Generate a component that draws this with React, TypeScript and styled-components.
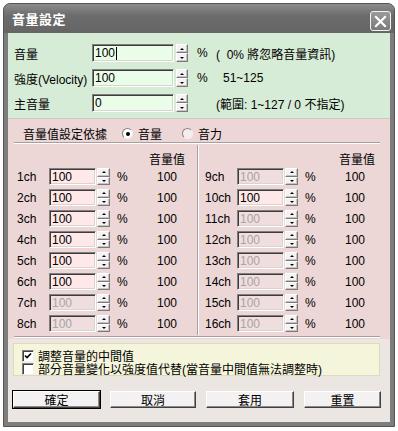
import React from 'react';
import styled, { createGlobalStyle, css } from 'styled-components';

const GlobalStyle = createGlobalStyle`
  html, body {
    margin: 0;
    padding: 0;
    background: #ffffff;
  }
  body {
    font-family: "Liberation Sans", "Noto Sans CJK TC", sans-serif;
    font-size: 12px;
    color: #000;
  }
`;

const Window = styled.div`
  margin: 3px 0 0 3px;
  width: 392px;
  height: 424px;
  box-sizing: border-box;
  border: 1px solid #555;
  border-radius: 7px 7px 0 0;
  background: #7d7d7d;
  padding: 0 4px 4px;
  display: flex;
  flex-direction: column;
`;

const TitleBar = styled.div`
  height: 29px;
  margin: 0 -4px;
  padding: 0 3px 0 8px;
  border-radius: 6px 6px 0 0;
  background: linear-gradient(#8c8c8c, #6c6c6c 40%, #656565);
  display: flex;
  align-items: center;
  justify-content: space-between;
`;

const Title = styled.span`
  color: #fff;
  font-weight: 700;
  font-size: 13px;
  letter-spacing: 0.5px;
`;

const CloseButton = styled.div`
  width: 21px;
  height: 20px;
  box-sizing: border-box;
  border: 1px solid #f2f2f2;
  border-radius: 3px;
  background: linear-gradient(#9a9a9a, #7a7a7a);
  display: flex;
  align-items: center;
  justify-content: center;
  margin-top: 5px;
`;

const Client = styled.div`
  flex: 1;
  background: #ebe6e1;
  display: flex;
  flex-direction: column;
`;

/* ---------- top (green) part ---------- */

const GreenPanel = styled.div`
  background: #d7ecd6;
  padding: 11px 0 6px 6px;
  display: flex;
  flex-direction: column;
  gap: 7px;
`;

const FieldRow = styled.div`
  display: flex;
  align-items: center;
  height: 18px;
`;

const FieldLabel = styled.span`
  width: 78px;
  flex: none;
`;

const TextBox = styled.div<{ $tone: 'green' | 'pink'; $disabled?: boolean; $width: number }>`
  width: ${p => p.$width}px;
  height: 100%;
  flex: none;
  box-sizing: border-box;
  border-style: solid;
  border-width: 1px;
  border-color: #7f7f7f #ffffff #ffffff #7f7f7f;
  box-shadow: inset 1px 1px 0 #3c3c3c, inset -1px -1px 0 #d8d4d0;
  padding-left: 2px;
  display: flex;
  align-items: center;
  line-height: 1;
  font-size: 12px;
  ${p => p.$tone === 'green' && css`
    background: #e9fde9;
  `}
  ${p => p.$tone === 'pink' && css`
    background: ${p.$disabled ? '#f0dede' : '#ffe8e8'};
    color: ${p.$disabled ? '#a9a3a3' : '#000'};
  `}
`;

const Caret = styled.span`
  display: inline-block;
  width: 1px;
  height: 13px;
  background: #000;
  margin-left: 1px;
`;

const Spinner = styled.div<{ $width: number; $gap: number }>`
  width: ${p => p.$width}px;
  height: 100%;
  margin-left: ${p => p.$gap}px;
  flex: none;
  display: flex;
  flex-direction: column;
`;

const SpinHalf = styled.div<{ $dir: 'up' | 'down' }>`
  flex: 1;
  box-sizing: border-box;
  background: #f4f2f2;
  border: 1px solid;
  border-color: #ffffff #7a7a7a #7a7a7a #ffffff;
  box-shadow: inset -1px -1px 0 #c8c4c4;
  display: flex;
  align-items: center;
  justify-content: center;

  &::after {
    content: '';
    width: 0;
    height: 0;
    border-left: 2px solid transparent;
    border-right: 2px solid transparent;
    ${p => p.$dir === 'up'
      ? 'border-bottom: 2px solid #000;'
      : 'border-top: 2px solid #000;'}
  }
`;

const Unit = styled.span<{ $pad: number; $width: number }>`
  width: ${p => p.$width}px;
  padding-left: ${p => p.$pad}px;
  box-sizing: border-box;
  flex: none;
`;

const Note = styled.span<{ $indent?: number }>`
  padding-left: ${p => p.$indent ?? 0}px;
  white-space: pre;
`;

/* ---------- middle (pink) part ---------- */

const PinkPanel = styled.div`
  background: #ecd6d6;
  border-top: 1px solid #cfc6c6;
  padding-bottom: 1px;
`;

const ModeRow = styled.div`
  height: 17px;
  margin-top: 6px;
  padding-left: 15px;
  display: flex;
  align-items: center;
`;

const ModeLabel = styled.span`
  margin-right: 15px;
`;

const Radio = styled.span<{ $checked?: boolean }>`
  width: 11px;
  height: 11px;
  box-sizing: border-box;
  border-radius: 50%;
  border: 1px solid;
  border-color: #8a8080 #f4eeee #f4eeee #8a8080;
  background: ${p => (p.$checked ? '#ffffff' : '#f6eeee')};
  margin-right: 5px;
  display: flex;
  align-items: center;
  justify-content: center;

  &::after {
    content: '';
    width: 4px;
    height: 4px;
    border-radius: 50%;
    background: ${p => (p.$checked ? '#000' : 'transparent')};
  }
`;

const RadioText = styled.span`
  margin-right: 20px;
`;

const EtchedLine = styled.div`
  height: 0;
  border-top: 1px solid #a89c9c;
  border-bottom: 1px solid #ffffff;
  margin: 0 10px 0 6px;
`;

const Columns = styled.div`
  display: flex;
  height: 192px;
`;

const ChannelColumn = styled.div<{ $width?: number; $padLeft: number; $padRight: number }>`
  ${p => (p.$width ? `width: ${p.$width}px; flex: none;` : 'flex: 1;')}
  padding: 6px ${p => p.$padRight}px 0 ${p => p.$padLeft}px;
  box-sizing: border-box;
  display: flex;
  flex-direction: column;
  gap: 4px;
`;

const ColumnHeader = styled.div`
  height: 17px;
  margin-bottom: -3px;
  display: flex;
  align-items: center;
  justify-content: flex-end;
`;

const VDivider = styled.div`
  width: 0;
  margin: 1px 0 1px;
  border-left: 1px solid #a89c9c;
  border-right: 1px solid #ffffff;
`;

const ChannelRow = styled.div`
  display: flex;
  align-items: center;
  height: 17px;
`;

const ChannelLabel = styled.span`
  width: 32px;
  flex: none;
`;

const Value = styled.span`
  width: 47px;
  flex: none;
  text-align: right;
`;

/* ---------- bottom part ---------- */

const OptionBox = styled.div`
  margin: 4px 10px 0 5px;
  height: 33px;
  box-sizing: border-box;
  border: 1px solid #dcdcb8;
  background: #f5f5dc;
  padding: 5px 0 0 8px;
  display: flex;
  flex-direction: column;
`;

const OptionRow = styled.div`
  height: 13px;
  display: flex;
  align-items: center;
`;

const CheckBox = styled.span`
  width: 12px;
  height: 12px;
  box-sizing: border-box;
  border: 1px solid;
  border-color: #808080 #f0f0f0 #f0f0f0 #808080;
  box-shadow: inset 1px 1px 0 #404040;
  background: #ffffff;
  margin-right: 4px;
  display: flex;
  align-items: center;
  justify-content: center;
`;

const ButtonRow = styled.div`
  margin-top: 15px;
  padding-left: 5px;
  display: flex;
  gap: 10px;
`;

const PushButton = styled.div<{ $width: number; $default?: boolean }>`
  width: ${p => p.$width}px;
  height: 17px;
  box-sizing: border-box;
  background: #f3f1f1;
  border: 1px solid;
  border-color: #ffffff #404040 #404040 #ffffff;
  box-shadow: inset -1px -1px 0 #8a8a8a;
  display: flex;
  align-items: center;
  justify-content: center;
  ${p => p.$default && css`
    outline: 1px solid #000;
  `}
`;

interface Channel {
  n: number;
  enabled: boolean;
}

const leftChannels: Channel[] = [1, 2, 3, 4, 5, 6, 7, 8].map(n => ({ n, enabled: n <= 6 }));
const rightChannels: Channel[] = [9, 10, 11, 12, 13, 14, 15, 16].map(n => ({ n, enabled: n === 10 }));

const Spin: React.FC<{ width: number; gap: number }> = ({ width, gap }) => (
  <Spinner $width={width} $gap={gap}>
    <SpinHalf $dir="up" />
    <SpinHalf $dir="down" />
  </Spinner>
);

const ChannelList: React.FC<{ channels: Channel[] }> = ({ channels }) => (
  <>
    <ColumnHeader>音量值</ColumnHeader>
    {channels.map(ch => (
      <ChannelRow key={ch.n}>
        <ChannelLabel>{ch.n}ch</ChannelLabel>
        <TextBox $tone="pink" $width={47} $disabled={!ch.enabled}>100</TextBox>
        <Spin width={13} gap={1} />
        <Unit $pad={7} $width={20}>%</Unit>
        <Value>100</Value>
      </ChannelRow>
    ))}
  </>
);

const App: React.FC = () => {
  return (
    <>
      <GlobalStyle />
      <Window>
        <TitleBar>
          <Title>音量設定</Title>
          <CloseButton>
            <svg width="13" height="13" viewBox="0 0 13 13">
              <path d="M2 2 L11 11 M11 2 L2 11" stroke="#fff" strokeWidth="2.2" strokeLinecap="square" />
            </svg>
          </CloseButton>
        </TitleBar>

        <Client>
          <GreenPanel>
            <FieldRow>
              <FieldLabel>音量</FieldLabel>
              <TextBox $tone="green" $width={82}>100<Caret /></TextBox>
              <Spin width={12} gap={2} />
              <Unit $pad={9} $width={28}>%</Unit>
              <Note>(  0% 將忽略音量資訊)</Note>
            </FieldRow>
            <FieldRow>
              <FieldLabel>強度(Velocity)</FieldLabel>
              <TextBox $tone="green" $width={82}>100</TextBox>
              <Spin width={12} gap={2} />
              <Unit $pad={9} $width={28}>%</Unit>
              <Note $indent={7}>51~125</Note>
            </FieldRow>
            <FieldRow>
              <FieldLabel>主音量</FieldLabel>
              <TextBox $tone="green" $width={82}>0</TextBox>
              <Spin width={12} gap={2} />
              <Unit $pad={9} $width={28} />
              <Note>(範圍: 1~127 / 0 不指定)</Note>
            </FieldRow>
          </GreenPanel>

          <PinkPanel>
            <ModeRow>
              <ModeLabel>音量值設定依據</ModeLabel>
              <Radio $checked />
              <RadioText>音量</RadioText>
              <Radio />
              <RadioText>音力</RadioText>
            </ModeRow>
            <EtchedLine />
            <Columns>
              <ChannelColumn $width={189} $padLeft={9} $padRight={12}>
                <ChannelList channels={leftChannels} />
              </ChannelColumn>
              <VDivider />
              <ChannelColumn $padLeft={6} $padRight={15}>
                <ChannelList channels={rightChannels} />
              </ChannelColumn>
            </Columns>
            <EtchedLine />
          </PinkPanel>

          <OptionBox>
            <OptionRow>
              <CheckBox>
                <svg width="8" height="8" viewBox="0 0 8 8">
                  <path d="M1 3.5 L3 5.5 L7 1.5" stroke="#000" strokeWidth="1.6" fill="none" />
                </svg>
              </CheckBox>
              調整音量的中間值
            </OptionRow>
            <OptionRow>
              <CheckBox />
              部分音量變化以強度值代替(當音量中間值無法調整時)
            </OptionRow>
          </OptionBox>

          <ButtonRow>
            <PushButton $width={87} $default>確定</PushButton>
            <PushButton $width={86}>取消</PushButton>
            <PushButton $width={88}>套用</PushButton>
            <PushButton $width={77}>重置</PushButton>
          </ButtonRow>
        </Client>
      </Window>
    </>
  );
};

export default App;
